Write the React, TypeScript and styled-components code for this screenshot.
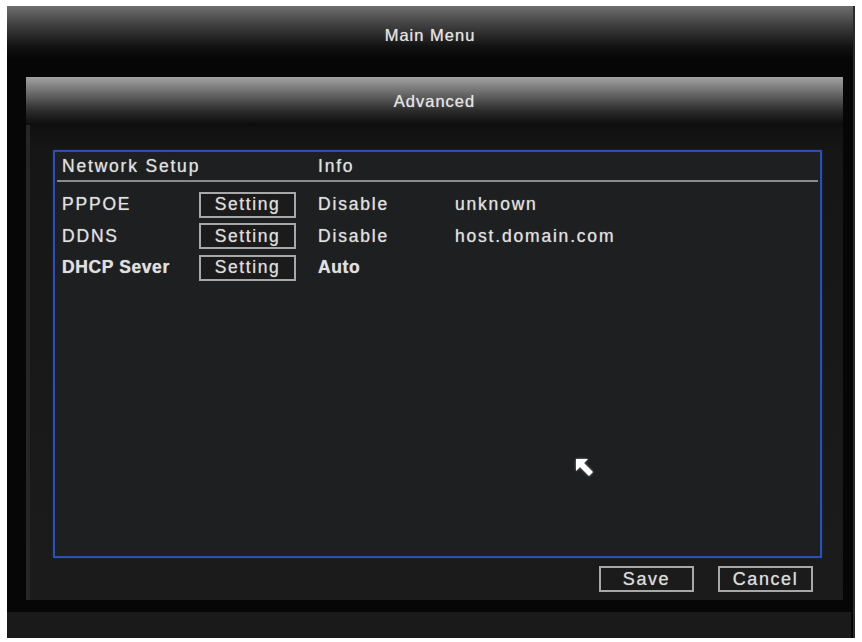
import * as React from "react";
import styled, { createGlobalStyle } from "styled-components";

const GlobalStyle = createGlobalStyle`
  html, body {
    margin: 0;
    padding: 0;
    background: #ffffff;
  }
  body {
    font-family: "Liberation Sans", Arial, sans-serif;
  }
`;

const Frame = styled.div`
  box-sizing: border-box;
  width: 848px;
  height: 632px;
  margin: 6px 0 0 7px;
  background: #060606;
  display: flex;
  flex-direction: column;
  border-right: 2px solid #2a2a2a;
`;

const TitleBar = styled.div<{ $light?: boolean }>`
  flex: none;
  height: ${p => (p.$light ? 48 : 54)}px;
  display: flex;
  align-items: center;
  justify-content: center;
  background: ${p =>
    p.$light
      ? "linear-gradient(180deg, #a2a2a2 0%, #707070 30%, #2c2c2c 70%, #0c0c0c 100%)"
      : "linear-gradient(180deg, #6e6e6e 0%, #404040 35%, #121212 75%, #050505 100%)"};
  color: #e4e4e4;
  font-size: 16.5px;
  letter-spacing: 1px;
  text-shadow: 0 0 1px rgba(255, 255, 255, 0.6);
  padding-top: ${p => (p.$light ? 0 : 4)}px;
  box-sizing: border-box;
`;

const Panel = styled.div`
  margin: 17px 10px 0 19px;
  display: flex;
  flex-direction: column;
`;

const PanelBody = styled.div`
  height: 475px;
  box-sizing: border-box;
  background: linear-gradient(180deg, #101010 0px, #161616 26px, #1b1b1b 100%);
  border-left: 4px solid #262626;
  padding: 25px 21px 0 23px;
  display: flex;
  flex-direction: column;
`;

const BlueBox = styled.div`
  position: relative;
  height: 408px;
  box-sizing: border-box;
  border: 2px solid #2d4fb4;
  box-shadow: 0 0 2px #1a2f70;
  background: #1e1f21;
  padding: 0 7px;
`;

const Grid = styled.div`
  display: grid;
  grid-template-columns: 137px 119px 137px 1fr;
  align-items: center;
`;

const HeadRow = styled(Grid)`
  height: 28px;
  border-bottom: 2px solid #8a8a8a;
  margin: 0 -5px;
  padding: 0 5px;
`;

const Rows = styled.div`
  padding-top: 7px;
  display: flex;
  flex-direction: column;
`;

const Row = styled(Grid)`
  height: 31.5px;
`;

const Cell = styled.div<{ $bold?: boolean; $span?: number }>`
  color: #e0e0e0;
  font-size: 17.5px;
  font-weight: ${p => (p.$bold ? 700 : 400)};
  letter-spacing: ${p => (p.$bold ? 0.6 : 1.8)}px;
  white-space: nowrap;
  text-shadow: 0 0 1px rgba(255, 255, 255, 0.6);
  grid-column: ${p => (p.$span ? `span ${p.$span}` : "auto")};
`;

const OutlineButton = styled.div<{ $w: number; $size?: number }>`
  box-sizing: border-box;
  width: ${p => p.$w}px;
  height: 26px;
  border: 2px solid #a8a8a8;
  background: #1b1b1b;
  color: #dcdcdc;
  font-size: ${p => p.$size ?? 17.5}px;
  letter-spacing: 1.6px;
  display: flex;
  align-items: center;
  justify-content: center;
  text-shadow: 0 0 1px rgba(255, 255, 255, 0.6);
`;

const Footer = styled.div`
  display: flex;
  justify-content: flex-end;
  gap: 24px;
  padding: 8px 9px 0 0;
`;

const Cursor = styled.svg`
  position: absolute;
  left: 520px;
  top: 306px;
  filter: drop-shadow(0 0 1px rgba(255, 255, 255, 0.6));
`;

const Gutter = styled.div`
  height: 12px;
  flex: none;
`;

const BottomStrip = styled.div`
  flex: 1;
  background: #1a1a1a;
  margin: 0 2px 0 0;
`;

const rows = [
  { name: "PPPOE", status: "Disable", extra: "unknown", bold: false },
  { name: "DDNS", status: "Disable", extra: "host.domain.com", bold: false },
  { name: "DHCP Sever", status: "Auto", extra: "", bold: true },
];

export default function App() {
  return (
    <>
      <GlobalStyle />
      <Frame>
        <TitleBar>Main Menu</TitleBar>
        <Panel>
          <TitleBar $light>Advanced</TitleBar>
          <PanelBody>
            <BlueBox>
              <HeadRow>
                <Cell $span={2}>Network Setup</Cell>
                <Cell>Info</Cell>
              </HeadRow>
              <Rows>
                {rows.map(r => (
                  <Row key={r.name}>
                    <Cell $bold={r.bold}>{r.name}</Cell>
                    <OutlineButton $w={97}>Setting</OutlineButton>
                    <Cell $bold={r.bold}>{r.status}</Cell>
                    <Cell>{r.extra}</Cell>
                  </Row>
                ))}
              </Rows>
              <Cursor width="20" height="20" viewBox="0 0 20 20">
                <path d="M1 1 L13 1 L9 5 L18 14 L14 18 L5 9 L1 13 Z" fill="#ffffff" />
              </Cursor>
            </BlueBox>
            <Footer>
              <OutlineButton $w={95} $size={18}>Save</OutlineButton>
              <OutlineButton $w={95} $size={18}>Cancel</OutlineButton>
            </Footer>
          </PanelBody>
        </Panel>
        <Gutter />
        <BottomStrip />
      </Frame>
    </>
  );
}
